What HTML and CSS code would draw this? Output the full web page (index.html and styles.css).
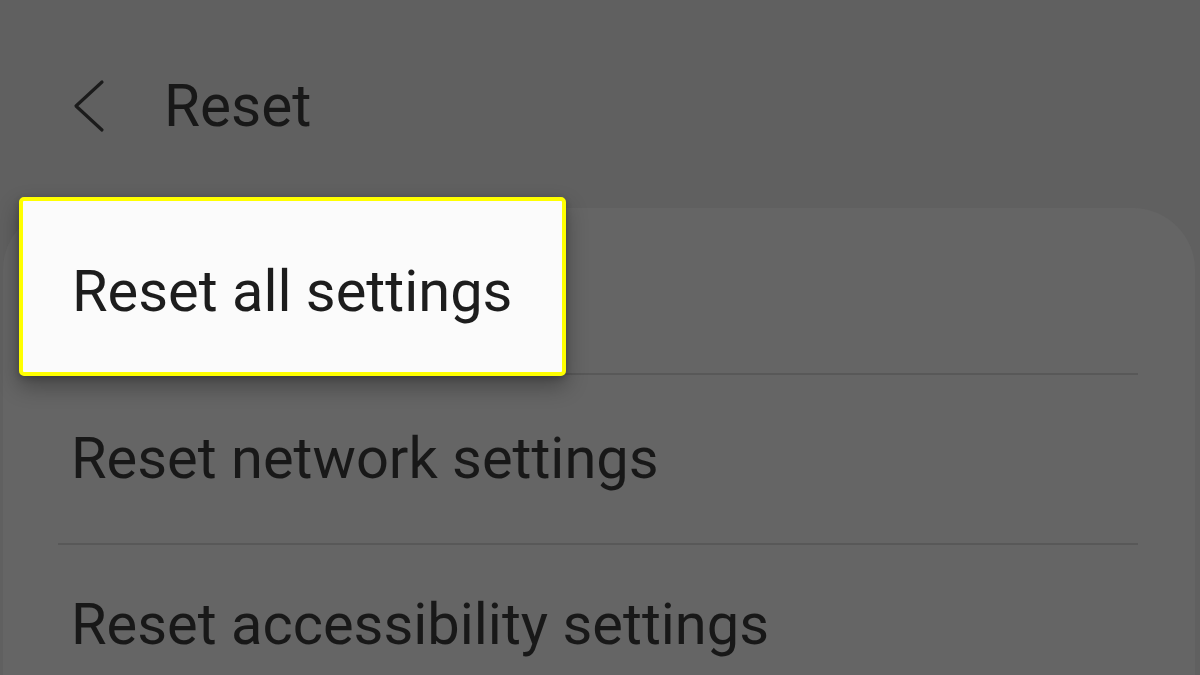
FILE: index.html
```html
<!DOCTYPE html>
<html>
<head>
<meta charset="utf-8">
<link rel="stylesheet" href="styles.css">
</head>
<body>
<div class="screen">
  <header class="appbar">
    <svg class="back" width="40" height="56" viewBox="0 0 40 56">
      <polyline points="31,4 5,28 31,52" fill="none" stroke="#1b1b1b" stroke-width="3.2" stroke-linecap="round" stroke-linejoin="round"/>
    </svg>
    <h1 class="title">Reset</h1>
  </header>
  <main class="card">
    <div class="row row-first">
      <div class="spotlight"><span class="label">Reset all settings</span></div>
    </div>
    <div class="divider"></div>
    <div class="row row-mid"><span class="label">Reset network settings</span></div>
    <div class="divider"></div>
    <div class="row row-last"><span class="label">Reset accessibility settings</span></div>
  </main>
</div>
</body>
</html>
```

FILE: styles.css
```css
html, body {
  margin: 0;
  padding: 0;
  background: #606060;
  overflow: hidden;
}
.screen {
  width: 1200px;
  height: 675px;
  font-family: Roboto, "Noto Sans", sans-serif;
  color: #1b1b1b;
}
.appbar {
  height: 208px;
  box-sizing: border-box;
  padding: 4px 0 0 71px;
  display: flex;
  align-items: center;
}
.back {
  display: block;
  width: 40px;
  height: 56px;
}
.title {
  margin: 0 0 0 53px;
  font-size: 58.5px;
  font-weight: 400;
  line-height: 1;
  color: #181818;
}
.card {
  margin: 0 5px 0 3px;
  background: #656565;
  border-radius: 62px 62px 0 0;
  height: 467px;
}
.row {
  display: flex;
  align-items: center;
  padding-left: 68px;
}
.label {
  font-size: 57.8px;
  line-height: 1;
  white-space: nowrap;
  color: #181818;
}
.row-first {
  position: relative;
  height: 165px;
}
.row-mid {
  height: 168px;
}
.row-last {
  height: 160px;
}
.divider {
  height: 2px;
  margin: 0 57px 0 55px;
  background: #585858;
}
.spotlight {
  position: absolute;
  left: 16px;
  top: -11px;
  width: 547px;
  height: 179px;
  box-sizing: border-box;
  border: 4px solid #ffff00;
  border-radius: 5px;
  background: #fbfbfb;
  box-shadow: 0 10px 22px rgba(0, 0, 0, 0.32), 0 2px 6px rgba(0, 0, 0, 0.2);
  display: flex;
  align-items: center;
  padding: 11px 0 0 49px;
}
.spotlight .label {
  color: #1d1d1d;
}
```
